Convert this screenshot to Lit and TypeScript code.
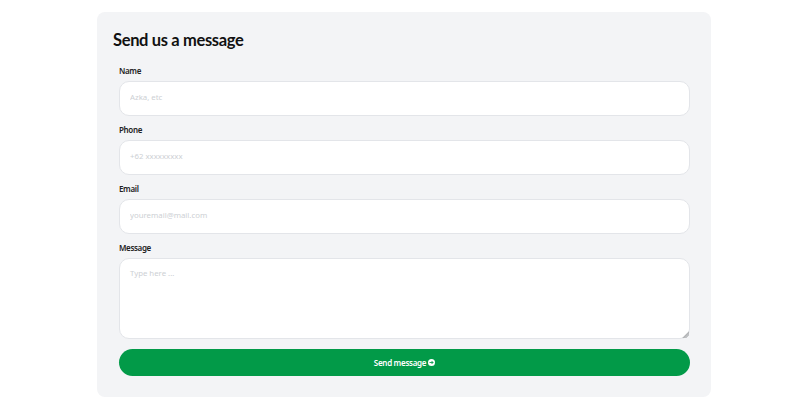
import { LitElement, html, css } from "lit";
import { customElement } from "lit/decorators.js";

@customElement("app-root")
export class AppRoot extends LitElement {
  static styles = css`
    :host { display: block; width: 800px; height: 402px; background: #fff; font-family: "Noto Sans", sans-serif; overflow: hidden; }
    .page { padding: 12px 89px 5px 97px; }
    .card { background: #f3f4f6; border-radius: 8px; height: 385px; box-sizing: border-box; padding: 17px 21px 21px 16px; }
    h2 { margin: 0 0 12px; font: 700 16.5px/23px Lato, sans-serif; color: #111; letter-spacing: -0.35px; }
    form { display: flex; flex-direction: column; padding-left: 6px; }
    .field { display: flex; flex-direction: column; }
    label { font-size: 8px; font-weight: 600; line-height: 13px; height: 13px; color: #222; margin-bottom: 4px; letter-spacing: -0.35px; }
    input, textarea {
      box-sizing: border-box; width: 100%; border: 1px solid #e3e5e9; border-radius: 10px; background: #fff;
      font: 7.8px "Noto Sans", sans-serif; padding: 0 10px; color: #111; outline: none; margin: 0; display: block;
    }
    input { height: 35px; margin-bottom: 7px; padding-bottom: 3px; }
    textarea { height: 81px; padding-top: 9px; margin-bottom: 10px; resize: vertical; }
    textarea::-webkit-resizer { background: linear-gradient(135deg, transparent 76%, #b0b2b4 78%, #c5c7c9 90%, transparent 92%); }
    ::placeholder { color: #cdd0d4; opacity: 1; }
    button {
      height: 27px; border: 0; border-radius: 14px; background: #029a48; color: #fff;
      font: 600 8px "Noto Sans", sans-serif; letter-spacing: -0.3px; display: flex; align-items: center; justify-content: center; gap: 2px; padding: 0;
    }
    svg { width: 7px; height: 7px; display: block; }
  `;
  render() {
    return html`<div class="page"><div class="card">
      <h2>Send us a message</h2>
      <form>
        <div class="field"><label>Name</label><input placeholder="Azka, etc"></div>
        <div class="field"><label>Phone</label><input placeholder="+62 xxxxxxxxx"></div>
        <div class="field"><label>Email</label><input placeholder="youremail@mail.com"></div>
        <div class="field"><label>Message</label><textarea placeholder="Type here ..."></textarea></div>
        <button type="button">Send message
          <svg viewBox="0 0 16 16"><circle cx="8" cy="8" r="8" fill="#fff"/><path d="M3.5 8h8M8 4.5 11.5 8 8 11.5" fill="none" stroke="#029a48" stroke-width="2"/></svg>
        </button>
      </form>
    </div></div>`;
  }
}
